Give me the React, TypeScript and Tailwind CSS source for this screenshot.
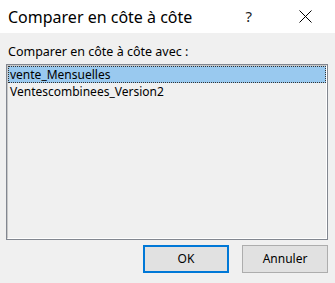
const items = ['vente_Mensuelles', 'Ventescombinees_Version2'];

function CloseGlyph() {
  return (
    <svg width="13" height="13" viewBox="0 0 13 13" className="mr-[23px]" aria-hidden>
      <path d="M0.5 0.5 L12.5 12.5 M12.5 0.5 L0.5 12.5" stroke="#000" strokeWidth="1" fill="none" />
    </svg>
  );
}

export default function App() {
  return (
    <div
      className="flex h-[283px] w-[335px] flex-col bg-[#f0f0f0] text-black"
      style={{ fontFamily: '"Noto Sans", "Open Sans", sans-serif' }}
    >
      <div className="flex h-[33px] shrink-0 items-center bg-white pl-[8px]">
        <span className="flex-1 text-[16px] leading-none">Comparer en côte à côte</span>
        <span className="mr-[47px] text-[15px] leading-none text-[#222]">?</span>
        <CloseGlyph />
      </div>

      <div className="flex flex-1 flex-col pr-[7px] pl-[6px]">
        <div className="mt-[11px] h-[16px] pl-[2px] text-[12.5px] leading-[16px]">
          Comparer en côte à côte avec :
        </div>
        <div className="mt-[4px] h-[176px] border border-[#828790]">
          <div className="h-full border-t border-r border-b border-l border-t-[#c8c8c8] border-r-white border-b-white border-l-[#c8c8c8]">
            {items.map((item, i) => (
              <div
                key={item}
                className={
                  i === 0
                    ? 'h-[17px] border border-dotted border-[#333] bg-[#99c9ef] pl-[1px] text-[12px] leading-[15px]'
                    : 'h-[17px] border border-transparent pl-[1px] text-[12px] leading-[15px]'
                }
              >
                {item}
              </div>
            ))}
          </div>
        </div>

        <div className="mt-[5px] flex justify-end gap-[13px]">
          <button className="h-[28px] w-[86px] border-2 border-[#0078d7] bg-[#e1e1e1] text-[12px]">
            OK
          </button>
          <button className="h-[28px] w-[86px] border border-[#adadad] bg-[#e1e1e1] text-[12px]">
            Annuler
          </button>
        </div>
      </div>
    </div>
  );
}
